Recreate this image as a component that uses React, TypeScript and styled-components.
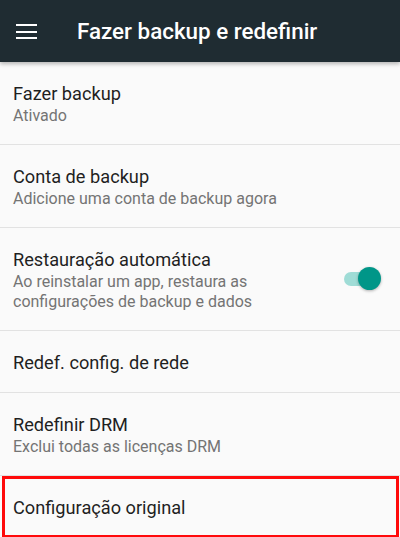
import React from 'react'
import styled, { createGlobalStyle } from 'styled-components'

const GlobalStyle = createGlobalStyle`
  html, body {
    margin: 0;
    padding: 0;
    background: #fafafa;
    overflow: hidden;
  }
  body {
    font-family: Roboto, 'Noto Sans', 'Liberation Sans', sans-serif;
  }
`

const Screen = styled.div`
  width: 400px;
  height: 537px;
  background: #fafafa;
  display: flex;
  flex-direction: column;
  overflow: hidden;
`

const Toolbar = styled.header`
  height: 62px;
  flex-shrink: 0;
  background: #1f2c32;
  display: flex;
  align-items: center;
  padding-left: 16px;
  box-shadow: 0 2px 4px rgba(0, 0, 0, 0.28);
  position: relative;
  z-index: 1;
`

const MenuButton = styled.div`
  width: 21px;
  height: 15px;
  display: flex;
  flex-direction: column;
  justify-content: space-between;
  margin-top: 1px;

  span {
    display: block;
    height: 2px;
    background: #ffffff;
  }
`

const Title = styled.h1`
  margin: 0 0 0 40px;
  color: #ffffff;
  font-size: 22.4px;
  font-weight: 500;
  line-height: 24px;
`

const List = styled.ul`
  margin: 0;
  padding: 0;
  list-style: none;
`

const Row = styled.li<{ $highlighted?: boolean; $single?: boolean }>`
  display: flex;
  align-items: center;
  padding: 20px 19px ${(p) => (p.$single ? '17px' : '18px')} 13px;
  border-bottom: 1px solid #e2e2e2;
  ${(p) =>
    p.$highlighted &&
    `
    margin: 0 1px 0 2px;
    padding-left: 11px;
    padding-bottom: 18px;
    border-bottom: none;
    box-shadow: inset 0 0 0 3px #ff0a0a;
  `}
`

const Texts = styled.div`
  flex: 1;
  display: flex;
  flex-direction: column;
`

const Label = styled.div`
  font-size: 18.2px;
  line-height: 24px;
  color: #1f1f1f;
`

const Summary = styled.div`
  font-size: 16px;
  line-height: 20px;
  color: #747474;
`

const Switch = styled.div<{ $on?: boolean }>`
  position: relative;
  width: 37px;
  height: 23px;
  flex-shrink: 0;
  margin-top: -3px;

  &::before {
    content: '';
    position: absolute;
    left: 0;
    top: 5px;
    width: 31px;
    height: 14px;
    border-radius: 7px;
    background: ${(p) => (p.$on ? '#9fdcd6' : '#bdbdbd')};
  }

  &::after {
    content: '';
    position: absolute;
    top: 0;
    left: ${(p) => (p.$on ? '14px' : '0')};
    width: 23px;
    height: 23px;
    border-radius: 50%;
    background: ${(p) => (p.$on ? '#009688' : '#f1f1f1')};
    box-shadow: 0 1px 3px rgba(0, 0, 0, 0.3);
  }
`

type Item = {
  label: string
  summary?: string
  toggle?: boolean
  highlighted?: boolean
}

const items: Item[] = [
  { label: 'Fazer backup', summary: 'Ativado' },
  { label: 'Conta de backup', summary: 'Adicione uma conta de backup agora' },
  {
    label: 'Restauração automática',
    summary: 'Ao reinstalar um app, restaura as configurações de backup e dados',
    toggle: true
  },
  { label: 'Redef. config. de rede' },
  { label: 'Redefinir DRM', summary: 'Exclui todas as licenças DRM' },
  { label: 'Configuração original', highlighted: true }
]

const App = () => {
  return (
    <Screen>
      <GlobalStyle />
      <Toolbar>
        <MenuButton>
          <span />
          <span />
          <span />
        </MenuButton>
        <Title>Fazer backup e redefinir</Title>
      </Toolbar>
      <List>
        {items.map((item) => (
          <Row key={item.label} $highlighted={item.highlighted} $single={!item.summary}>
            <Texts>
              <Label>{item.label}</Label>
              {item.summary && (
                <Summary style={item.toggle ? { maxWidth: 270 } : undefined}>{item.summary}</Summary>
              )}
            </Texts>
            {item.toggle && <Switch $on />}
          </Row>
        ))}
      </List>
    </Screen>
  )
}

export default App
